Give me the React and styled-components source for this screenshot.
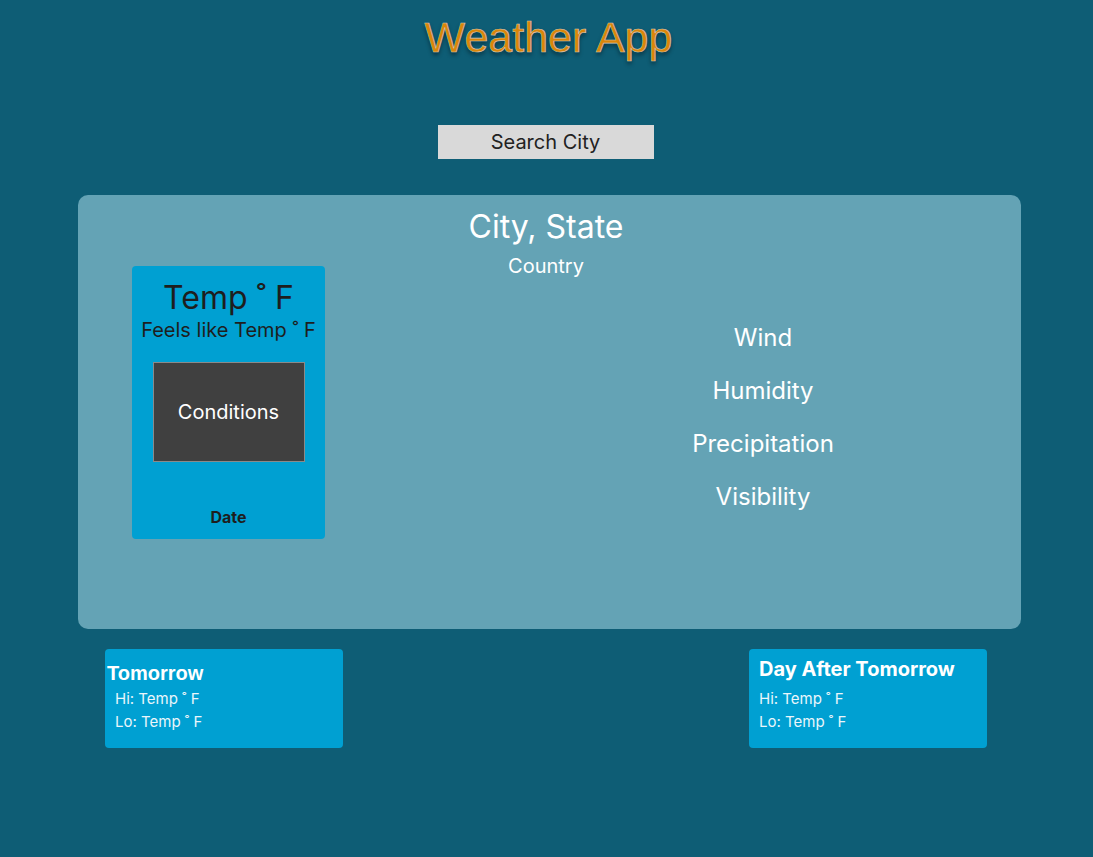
import React from 'react';
import styled, { createGlobalStyle } from 'styled-components';

const GlobalStyle = createGlobalStyle`
  html, body {
    margin: 0;
    padding: 0;
    background-color: #0e5d75;
  }
  body {
    font-family: Inter, "Noto Sans", sans-serif;
  }
`;

const Page = styled.div`
  width: 1093px;
  min-height: 857px;
  background-color: #0e5d75;
  display: flex;
  flex-direction: column;
  align-items: center;
`;

const Title = styled.h1`
  margin: 14px 0 0 4px;
  font-family: "Liberation Sans", Arial, sans-serif;
  font-size: 43px;
  font-weight: 400;
  line-height: 46px;
  color: #da860a;
  -webkit-text-stroke: 0.6px #d8c8b4;
  text-shadow: 0 3px 4px rgba(0, 0, 0, 0.45);
`;

const SearchBox = styled.div`
  margin: 65px 2px 0 0;
  width: 216px;
  height: 34px;
  background-color: #d9d9d9;
  color: #222;
  font-size: 20px;
  display: flex;
  align-items: center;
  justify-content: center;
`;

const Panel = styled.section`
  box-sizing: border-box;
  margin: 36px 0 0 6px;
  width: 943px;
  height: 434px;
  background-color: #64a3b5;
  border-radius: 10px;
  padding: 13px 61px 0 54px;
  display: grid;
  grid-template-columns: 193px 1fr;
  grid-template-rows: auto 1fr;
`;

const Header = styled.div`
  grid-column: 1 / -1;
  grid-row: 1;
  text-align: center;
  color: #fff;
`;

const City = styled.div`
  font-size: 32px;
  line-height: 38px;
`;

const Country = styled.div`
  margin-top: 8px;
  font-size: 20px;
  line-height: 24px;
`;

const TodayCard = styled.div`
  grid-column: 1;
  grid-row: 1 / 3;
  align-self: start;
  box-sizing: border-box;
  margin-top: 58px;
  height: 273px;
  background-color: #00a0d2;
  border-radius: 4px;
  padding: 12px 0 12px;
  display: flex;
  flex-direction: column;
  align-items: center;
  color: #1e1e1e;
`;

const Temp = styled.div`
  font-size: 32px;
  line-height: 39px;
`;

const FeelsLike = styled.div`
  font-size: 20px;
  line-height: 24px;
  white-space: nowrap;
  margin-top: 1px;
`;

const Conditions = styled.div`
  box-sizing: border-box;
  margin-top: 20px;
  width: 152px;
  height: 100px;
  background-color: #404040;
  border: 1px solid #8a8a8a;
  color: #fff;
  font-size: 20px;
  display: flex;
  align-items: center;
  justify-content: center;
`;

const DateLabel = styled.div`
  margin-top: auto;
  font-size: 16px;
  font-weight: 700;
  line-height: 19px;
`;

const Details = styled.ul`
  grid-column: 2;
  grid-row: 2;
  list-style: none;
  margin: 45px 0 0;
  padding: 0 0 0 241px;
  display: flex;
  flex-direction: column;
  align-items: center;
  gap: 24px;
`;

const DetailItem = styled.li`
  color: #fff;
  font-size: 24px;
  line-height: 29px;
`;

const ForecastRow = styled.div`
  box-sizing: border-box;
  width: 100%;
  margin-top: 20px;
  padding: 0 106px 0 105px;
  display: flex;
  justify-content: space-between;
`;

const ForecastCard = styled.div`
  box-sizing: border-box;
  width: 238px;
  height: 99px;
  background-color: #00a0d2;
  border-radius: 4px;
  padding: 8px 10px 0;
  color: #fff;
`;

const ForecastTitle = styled.div`
  font-family: ${(p) => (p.$flush ? '"Liberation Sans", Arial, sans-serif' : 'Inter, "Noto Sans", sans-serif')};
  font-size: 20px;
  font-weight: 700;
  line-height: 24px;
  margin: ${(p) => (p.$flush ? '4px 0 2px -8px' : '0 0 6px')};
`;

const ForecastLine = styled.div`
  font-size: 15px;
  line-height: 23px;
  color: #eaf6fb;
`;

const details = ['Wind', 'Humidity', 'Precipitation', 'Visibility'];

const forecasts = [
  { title: 'Tomorrow', flush: true },
  { title: 'Day After Tomorrow', flush: false },
];

const App = () => {
  return (
    <Page>
      <GlobalStyle />
      <Title>Weather App</Title>
      <SearchBox>Search City</SearchBox>
      <Panel>
        <Header>
          <City>City, State</City>
          <Country>Country</Country>
        </Header>
        <TodayCard>
          <Temp>Temp ˚ F</Temp>
          <FeelsLike>Feels like Temp ˚ F</FeelsLike>
          <Conditions>Conditions</Conditions>
          <DateLabel>Date</DateLabel>
        </TodayCard>
        <Details>
          {details.map((d) => (
            <DetailItem key={d}>{d}</DetailItem>
          ))}
        </Details>
      </Panel>
      <ForecastRow>
        {forecasts.map((f) => (
          <ForecastCard key={f.title}>
            <ForecastTitle $flush={f.flush}>{f.title}</ForecastTitle>
            <ForecastLine>Hi: Temp ˚ F</ForecastLine>
            <ForecastLine>Lo: Temp ˚ F</ForecastLine>
          </ForecastCard>
        ))}
      </ForecastRow>
    </Page>
  );
};

export default App;
